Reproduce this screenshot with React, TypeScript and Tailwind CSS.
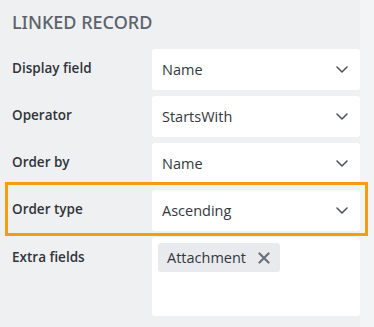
import React from "react";

const Chevron = () => (
  <svg width="12" height="7" viewBox="0 0 12 7" fill="none" className="shrink-0">
    <path d="M1 1l5 5 5-5" stroke="#4b5057" strokeWidth="1.5" strokeLinecap="round" strokeLinejoin="round" />
  </svg>
);

const Select = ({ value }: { value: string }) => (
  <div className="h-[41px] bg-white rounded-[3px] flex items-center justify-between pl-[10px] pr-[12px]">
    <span className="text-[14.5px] text-[#333840]">{value}</span>
    <Chevron />
  </div>
);

const Label = ({ children }: { children: React.ReactNode }) => (
  <div className="h-[41px] flex items-center text-[13.5px] font-semibold text-[#2f343b] pb-[3px]">{children}</div>
);

export default function App() {
  return (
    <div className="relative w-[374px] h-[327px] flex bg-[#f3f4f6] font-['Open_Sans',sans-serif] overflow-hidden">
      <div className="w-[360px] h-full bg-[#eff0f2] pl-[12px] pt-[10px]">
        <h2 className="font-['Noto_Sans',sans-serif] text-[18px] leading-[25px] font-medium text-[#5b626c]">LINKED RECORD</h2>
        <div className="grid grid-cols-[140px_208px] gap-y-[6px] mt-[14px]">
          <Label>Display field</Label>
          <Select value="Name" />
          <Label>Operator</Label>
          <Select value="StartsWith" />
          <Label>Order by</Label>
          <Select value="Name" />
          <Label>Order type</Label>
          <Select value="Ascending" />
          <div className="pt-[10px] text-[13.5px] font-semibold text-[#2f343b]">Extra fields</div>
          <div className="h-[79px] bg-white rounded-[3px] p-[6px]">
            <div className="inline-flex items-center h-[29px] bg-[#e8eaed] rounded-[3px] pl-[9px] pr-[10px] gap-[12px]">
              <span className="text-[14.5px] text-[#333840]">Attachment</span>
              <svg width="12" height="12" viewBox="0 0 12 12" fill="none">
                <path d="M1.5 1.5l9 9M10.5 1.5l-9 9" stroke="#6b7079" strokeWidth="2.2" strokeLinecap="round" />
              </svg>
            </div>
          </div>
        </div>
      </div>
      <div className="absolute left-[5px] top-[182px] w-[363px] h-[54px] border-[3px] border-[#f59c12] pointer-events-none" />
    </div>
  );
}
